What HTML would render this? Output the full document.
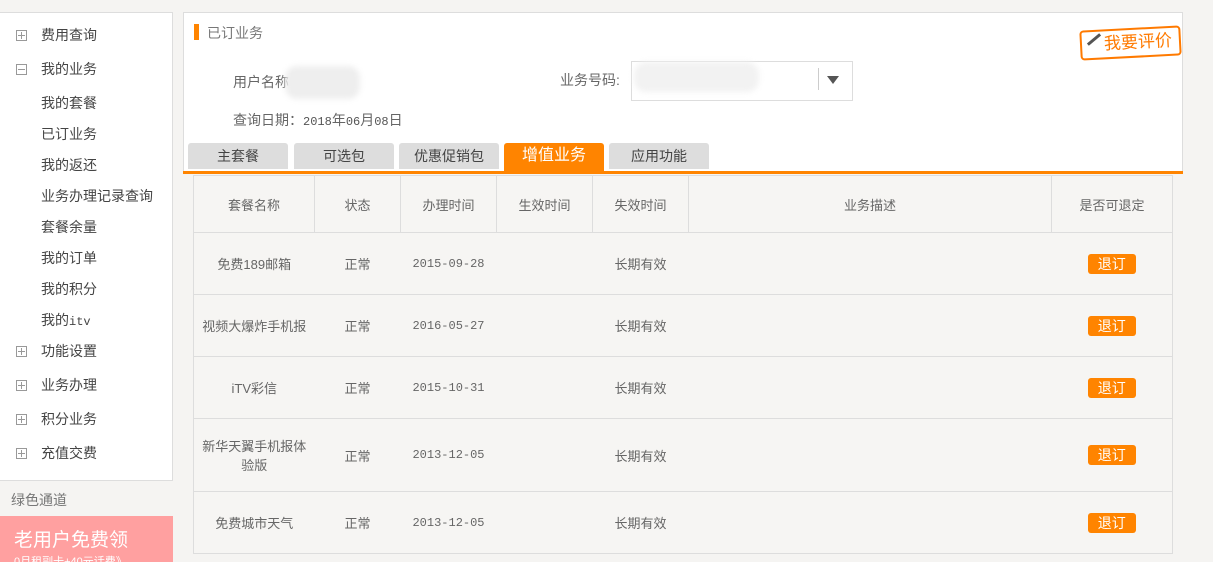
<!DOCTYPE html>
<html><head><meta charset="utf-8"><style>
*{margin:0;padding:0;box-sizing:border-box}
body{width:1213px;height:562px;background:#f5f4f2;font-family:"Liberation Sans","Noto Sans CJK SC",sans-serif;position:relative;overflow:hidden;color:#555;font-size:14px}
.a{position:absolute}
.side{left:0;top:12px;width:173px;height:469px;background:#fff;border:1px solid #ddd;border-left:none}
.it{position:absolute;left:41px;font-size:14px;color:#444;line-height:16px}
.ic{position:absolute;left:16px;width:11px;height:11px;border:1px solid #999}
.ic:before{content:"";position:absolute;left:1px;right:1px;top:4px;height:1px;background:#999}
.ic.p:after{content:"";position:absolute;top:1px;bottom:1px;left:4px;width:1px;background:#999}
.main{left:183px;top:12px;width:1000px;height:162px;background:#fff;border:1px solid #ddd;border-bottom:none}
.tab{position:absolute;top:143px;height:26px;width:100px;background:#ddd;border-radius:3px 3px 0 0;text-align:center;line-height:26px;font-size:14px;color:#444}
table{position:absolute;left:193px;top:175px;border-collapse:collapse;background:#f6f5f3;font-size:13px;color:#666;border:1px solid #ddd}
td{border-top:1px solid #ddd;text-align:center;padding:0 4px}
tr.h td{border:1px solid #ddd}
.b{display:inline-block;background:#ff8400;color:#fff;border-radius:3px;width:48px;height:20px;line-height:20px;font-size:14px}
.m{font-family:"Liberation Mono",monospace;font-size:12px}
</style></head><body>
<div class="a side"></div>
<div class="ic p" style="top:30px"></div><div class="it" style="top:27px">费用查询</div>
<div class="ic" style="top:64px"></div><div class="it" style="top:61px">我的业务</div>
<div class="it" style="top:95px">我的套餐</div>
<div class="it" style="top:126px">已订业务</div>
<div class="it" style="top:157px">我的返还</div>
<div class="it" style="top:188px">业务办理记录查询</div>
<div class="it" style="top:219px">套餐余量</div>
<div class="it" style="top:250px">我的订单</div>
<div class="it" style="top:281px">我的积分</div>
<div class="it" style="top:312px">我的<span class="m">itv</span></div>
<div class="ic p" style="top:346px"></div><div class="it" style="top:343px">功能设置</div>
<div class="ic p" style="top:380px"></div><div class="it" style="top:377px">业务办理</div>
<div class="ic p" style="top:414px"></div><div class="it" style="top:411px">积分业务</div>
<div class="ic p" style="top:448px"></div><div class="it" style="top:445px">充值交费</div>
<div class="a" style="left:11px;top:490px;color:#777;font-size:14px">绿色通道</div>
<div class="a" style="left:0;top:516px;width:173px;height:46px;background:#ffa0a0;color:#fff;overflow:hidden">
<div style="position:absolute;left:14px;top:14px;font-size:19px;line-height:22px">老用户免费领</div>
<div style="position:absolute;left:14px;top:37px;font-size:11px">0月租副卡+40元话费》</div></div>
<div class="a main"></div>
<div class="a" style="left:194px;top:24px;width:5px;height:16px;background:#ff8400"></div>
<div class="a" style="left:207px;top:23px;font-size:14px;color:#777">已订业务</div>
<div class="a" style="left:1080px;top:28px;width:101px;height:30px;border:2px solid #ff7a00;border-radius:4px;transform:rotate(-3deg);color:#ff7a00;font-size:17px;line-height:26px;padding-left:22px;background:#fff">我要评价</div>
<div class="a" style="left:1086px;top:38px;width:16px;height:3px;background:#555;transform:rotate(-40deg)"></div>
<div class="a" style="left:233px;top:72px;color:#666">用户名称</div>
<div class="a" style="left:285px;top:66px;width:75px;height:33px;background:#eee;border-radius:12px;filter:blur(3px)"></div>
<div class="a" style="left:560px;top:70px;color:#666">业务号码:</div>
<div class="a" style="left:631px;top:61px;width:222px;height:40px;border:1px solid #ddd;background:#fff"></div>
<div class="a" style="left:634px;top:62px;width:125px;height:30px;background:#f2f2f2;border-radius:12px;filter:blur(3px)"></div>
<div class="a" style="left:818px;top:68px;width:1px;height:22px;background:#ccc"></div>
<div class="a" style="left:827px;top:76px;border-left:6px solid transparent;border-right:6px solid transparent;border-top:8px solid #555"></div>
<div class="a" style="left:233px;top:110px;color:#666">查询日期：<span class="m" style="color:#555">2018</span>年<span class="m" style="color:#555">06</span>月<span class="m" style="color:#555">08</span>日</div>
<div class="tab" style="left:188px">主套餐</div>
<div class="tab" style="left:294px">可选包</div>
<div class="tab" style="left:399px">优惠促销包</div>
<div class="tab" style="left:504px;height:28px;background:#ff8400;color:#fff;font-size:16px">增值业务</div>
<div class="tab" style="left:609px">应用功能</div>
<div class="a" style="left:183px;top:171px;width:1000px;height:3px;background:#ff8400"></div>
<table>
<tr class="h" style="height:57px"><td style="width:121px">套餐名称</td><td style="width:86px">状态</td><td style="width:96px">办理时间</td><td style="width:96px">生效时间</td><td style="width:96px">失效时间</td><td style="width:363px">业务描述</td><td style="width:121px">是否可退定</td></tr>
<tr style="height:62px"><td>免费189邮箱</td><td>正常</td><td class="m">2015-09-28</td><td></td><td>长期有效</td><td></td><td><span class="b">退订</span></td></tr>
<tr style="height:62px"><td>视频大爆炸手机报</td><td>正常</td><td class="m">2016-05-27</td><td></td><td>长期有效</td><td></td><td><span class="b">退订</span></td></tr>
<tr style="height:62px"><td>iTV彩信</td><td>正常</td><td class="m">2015-10-31</td><td></td><td>长期有效</td><td></td><td><span class="b">退订</span></td></tr>
<tr style="height:73px"><td>新华天翼手机报体<br>验版</td><td>正常</td><td class="m">2013-12-05</td><td></td><td>长期有效</td><td></td><td><span class="b">退订</span></td></tr>
<tr style="height:62px"><td>免费城市天气</td><td>正常</td><td class="m">2013-12-05</td><td></td><td>长期有效</td><td></td><td><span class="b">退订</span></td></tr>
</table>
</body></html>
